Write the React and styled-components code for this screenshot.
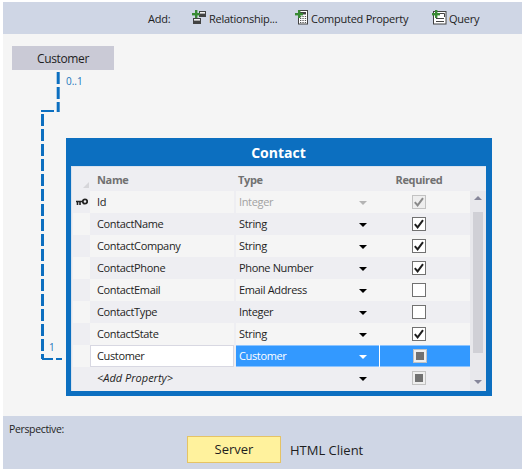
import React from "react";
import styled, { createGlobalStyle } from "styled-components";

const rows = [
  { name: "Id", type: "Integer", check: "on", locked: true },
  { name: "ContactName", type: "String", check: "on" },
  { name: "ContactCompany", type: "String", check: "on" },
  { name: "ContactPhone", type: "Phone Number", check: "on" },
  { name: "ContactEmail", type: "Email Address", check: "off" },
  { name: "ContactType", type: "Integer", check: "off" },
  { name: "ContactState", type: "String", check: "on" },
  { name: "Customer", type: "Customer", check: "mixed", selected: true },
  { name: "<Add Property>", type: "", check: "mixed", add: true },
];

const Global = createGlobalStyle`
  html, body { margin: 0; padding: 0; background: #fff; }
  body { font-family: "Open Sans", "Noto Sans", sans-serif; font-size: 11px; letter-spacing: -0.35px; color: #1e1e1e; }
`;

const Frame = styled.div`
  width: 526px;
  height: 470px;
  box-sizing: border-box;
  padding: 2px 4px 1px 3px;
  display: flex;
  flex-direction: column;
`;

const Toolbar = styled.div`
  height: 32px;
  flex: none;
  background: #cfd6e5;
  display: flex;
  align-items: center;
  padding-left: 145px;
  letter-spacing: -0.25px;
`;

const AddLabel = styled.span`
  width: 44px;
`;

const ToolButton = styled.div`
  display: flex;
  align-items: center;
  gap: 2px;
  width: ${(p) => p.$width}px;
`;

const ToolIcon = styled.svg`
  flex: none;
  margin-top: -2px;
`;

const Canvas = styled.div`
  flex: 1;
  position: relative;
  background: #f5f5f5;
`;

const Source = styled.div`
  position: absolute;
  left: 9px;
  top: 12px;
  width: 102px;
  height: 24px;
  background: #cacad6;
  font-size: 12px;
  line-height: 25px;
  text-align: center;
`;

const Connector = styled.svg`
  position: absolute;
  left: 0;
  top: 0;
`;

const Multiplicity = styled.span`
  position: absolute;
  left: ${(p) => p.$x}px;
  top: ${(p) => p.$y}px;
  color: #1c75bc;
  font-size: 10px;
  letter-spacing: 0;
  line-height: 14px;
`;

const Entity = styled.div`
  position: absolute;
  left: 63px;
  top: 104px;
  width: 426px;
  height: 258px;
  box-sizing: border-box;
  background: #0c6fc0;
  padding: 0 6px 5px 5px;
  display: flex;
  flex-direction: column;
`;

const EntityTitle = styled.div`
  height: 28px;
  flex: none;
  color: #fff;
  font-size: 14px;
  font-weight: 700;
  letter-spacing: 0;
  line-height: 29px;
  text-align: center;
`;

const Body = styled.div`
  flex: 1;
  background: #eeeef2;
  box-shadow: inset 1px 1px 0 #d8e2ee;
  display: flex;
  padding: 2px 0 0 2px;
`;

const Table = styled.div`
  width: 397px;
  flex: none;
`;

const HeaderRow = styled.div`
  display: grid;
  grid-template-columns: 17px 146px 144px 90px;
  height: 23px;
  align-items: center;
  color: #717171;
  font-weight: 700;
`;

const Corner = styled.div`
  width: 0;
  height: 0;
  justify-self: end;
  align-self: end;
  margin: 0 1px 3px 0;
  border-left: 6px solid transparent;
  border-bottom: 6px solid #d6d6da;
`;

const HeaderCell = styled.div`
  padding-left: ${(p) => p.$pad || 0}px;
  padding-right: ${(p) => p.$padRight || 0}px;
  text-align: ${(p) => p.$align || "left"};
`;

const Row = styled.div`
  display: grid;
  grid-template-columns: 17px 144px 145px 91px;
  height: 22px;
`;

const Marker = styled.div`
  display: flex;
  align-items: center;
  justify-content: center;
  background: ${(p) => (p.$plain ? "transparent" : p.$odd ? "#f5f5f5" : "#eeeef2")};
`;

const stripe = (p) => {
  if (p.$selected) return "#3399ff";
  if (p.$add) return "#eeeef2";
  return p.$odd ? "#f5f5f5" : "#eeeef2";
};

const NameCell = styled.div`
  box-sizing: border-box;
  line-height: ${(p) => (p.$selected ? 19 : 21)}px;
  background: ${(p) => (p.$selected ? "#fff" : stripe(p))};
  border: ${(p) => (p.$selected ? "1px solid #d8d8e2" : "none")};
  padding-left: ${(p) => (p.$selected ? 6 : 7)}px;
  font-style: ${(p) => (p.$add ? "italic" : "normal")};
  letter-spacing: ${(p) => (p.$add ? "0" : "inherit")};
`;

const TypeCell = styled.div`
  box-sizing: border-box;
  margin-left: 2px;
  padding: 0 12px 0 3px;
  background: ${stripe};
  box-shadow: ${(p) => (p.$selected ? "inset 0 1px 0 #8cc4ff, inset 0 -1px 0 #8cc4ff" : "none")};
  color: ${(p) => (p.$selected ? "#fff" : p.$locked ? "#a2a2a2" : "#1e1e1e")};
  display: flex;
  align-items: flex-start;
  justify-content: space-between;
`;

const TypeName = styled.span`
  line-height: 21px;
  height: 21px;
`;

const Arrow = styled.div`
  width: 0;
  height: 0;
  border-left: 4px solid transparent;
  border-right: 4px solid transparent;
  border-top: 4px solid ${(p) => p.$color};
  margin-top: 10px;
`;

const CheckCell = styled.div`
  box-sizing: border-box;
  display: flex;
  align-items: center;
  justify-content: center;
  padding-right: ${(p) => (p.$selected ? 11 : 12)}px;
  padding-left: ${(p) => (p.$selected ? 0 : 1)}px;
  background: ${stripe};
  box-shadow: ${(p) => (p.$selected ? "inset 0 1px 0 #8cc4ff, inset 0 -1px 0 #8cc4ff" : "none")};
  border-left: ${(p) => (p.$selected ? "1px solid #fff" : "none")};
`;

const Box = styled.div`
  box-sizing: border-box;
  width: 14px;
  height: 14px;
  border: 1px solid ${(p) => (p.$muted ? "#c2c2c2" : "#717171")};
  background: ${(p) => (p.$muted ? "#eeeeee" : "#fff")};
  display: flex;
  align-items: center;
  justify-content: center;
`;

const Fill = styled.div`
  width: 8px;
  height: 8px;
  background: #717171;
`;

const Scrollbar = styled.div`
  box-sizing: border-box;
  width: 16px;
  height: 200px;
  margin-top: 23px;
  padding: 5px 0 0 3px;
  background: #e8e8ec;
  display: flex;
  flex-direction: column;
`;

const ScrollTop = styled.div`
  width: 0;
  height: 0;
  margin-left: 1px;
  border-left: 4px solid transparent;
  border-right: 4px solid transparent;
  border-bottom: 4px solid #86869a;
`;

const ScrollThumb = styled.div`
  width: 10px;
  height: 141px;
  margin-top: 12px;
  background: #d0d0d6;
`;

const ScrollBottom = styled.div`
  width: 0;
  height: 0;
  margin: 27px 0 0 1px;
  border-left: 4px solid transparent;
  border-right: 4px solid transparent;
  border-top: 4px solid #86869a;
`;

const Footer = styled.div`
  height: 53px;
  flex: none;
  background: #cfd6e5;
  box-sizing: border-box;
  padding: 6px 0 0 6px;
  font-size: 10.5px;
  line-height: 14px;
`;

const Switcher = styled.div`
  margin: 0 0 0 178px;
  display: flex;
  align-items: center;
  font-size: 13px;
  letter-spacing: 0;
`;

const ActiveTab = styled.div`
  width: 94px;
  height: 27px;
  box-sizing: border-box;
  background: #fff29d;
  border: 1px solid #e5c365;
  text-align: center;
  line-height: 25px;
`;

const Tab = styled.div`
  margin-left: 9px;
`;

const PlusIcon = () => (
  <>
    <rect x="3" y="0" width="2.4" height="8" fill="#388a34" />
    <rect x="0" y="3" width="8" height="2.4" fill="#388a34" />
  </>
);

const RelationIcon = () => (
  <ToolIcon width="15" height="15" viewBox="0 0 15 15">
    <rect x="7" y="1" width="7" height="6" fill="#424242" />
    <rect x="8" y="2" width="5" height="1.6" fill="#f0f0f0" />
    <rect x="1" y="8" width="8" height="6" fill="#424242" />
    <rect x="2" y="9" width="6" height="1.6" fill="#f0f0f0" />
    <PlusIcon />
  </ToolIcon>
);

const CalcIcon = () => (
  <ToolIcon width="14" height="15" viewBox="0 0 14 15">
    <rect x="3.5" y="0.5" width="9" height="13.5" fill="#fff" stroke="#424242" />
    <rect x="5" y="2" width="6" height="2.5" fill="#424242" />
    <path d="M5 6.5h1.3M7.4 6.5h1.3M9.8 6.5h1.3M5 8.5h1.3M7.4 8.5h1.3M9.8 8.5h1.3M5 10.5h1.3M7.4 10.5h1.3M9.8 10.5h1.3M5 12.5h1.3M7.4 12.5h1.3M9.8 12.5h1.3" stroke="#555" />
    <PlusIcon />
  </ToolIcon>
);

const QueryIcon = () => (
  <ToolIcon width="15" height="15" viewBox="0 0 15 15">
    <rect x="1.5" y="1.5" width="12.5" height="12.5" fill="#fff" stroke="#424242" />
    <path d="M7 3.5h5.5V7M4 8.5h8M4 11.5h8" stroke="#424242" fill="none" />
    <PlusIcon />
  </ToolIcon>
);

const CheckMark = ({ color }) => (
  <svg width="12" height="12" viewBox="0 0 12 12">
    <path d="M1.8 6.2 4.6 9.4 10 2.2" stroke={color} strokeWidth="2" fill="none" />
  </svg>
);

const KeyIcon = () => (
  <svg width="12" height="8" viewBox="0 0 12 8">
    <circle cx="9" cy="3.5" r="2.2" fill="none" stroke="#222" strokeWidth="1.8" />
    <path d="M0 3.5h7M1.5 3.5v3.5M4 3.5v3.5" stroke="#222" strokeWidth="1.6" fill="none" />
  </svg>
);

const Required = ({ row }) => {
  if (row.check === "mixed")
    return (
      <Box $muted>
        <Fill />
      </Box>
    );
  return (
    <Box $muted={row.locked}>
      {row.check === "on" && <CheckMark color={row.locked ? "#8a8a8a" : "#1e1e1e"} />}
    </Box>
  );
};

const App = () => (
  <Frame>
    <Global />
    <Toolbar>
      <AddLabel>Add:</AddLabel>
      <ToolButton $width={103}>
        <RelationIcon />
        Relationship...
      </ToolButton>
      <ToolButton $width={137}>
        <CalcIcon />
        Computed Property
      </ToolButton>
      <ToolButton>
        <QueryIcon />
        Query
      </ToolButton>
    </Toolbar>
    <Canvas>
      <Source>Customer</Source>
      <Connector width="70" height="340">
        <g stroke="#0c6fc0" strokeWidth="3" fill="none">
          <path d="M55.2 38V78" strokeDasharray="12 3" />
          <path d="M51 77H38" strokeWidth="2" />
          <path d="M39.5 80V325" strokeDasharray="12 3" />
          <path d="M39 325H59" strokeWidth="2" strokeDasharray="11 3" />
        </g>
      </Connector>
      <Multiplicity $x={63} $y={40}>0..1</Multiplicity>
      <Multiplicity $x={46} $y={306}>1</Multiplicity>
      <Entity>
        <EntityTitle>Contact</EntityTitle>
        <Body>
          <Table>
            <HeaderRow>
              <Corner />
              <HeaderCell $pad={7}>Name</HeaderCell>
              <HeaderCell $pad={2}>Type</HeaderCell>
              <HeaderCell $align="center" $padRight={12}>Required</HeaderCell>
            </HeaderRow>
            {rows.map((row, i) => {
              const odd = i % 2 === 0;
              return (
                <Row key={row.name}>
                  <Marker $odd={!odd} $plain={row.add || row.locked}>
                    {row.locked && <KeyIcon />}
                  </Marker>
                  <NameCell $odd={odd} $selected={row.selected} $add={row.add}>
                    {row.name}
                  </NameCell>
                  <TypeCell $odd={odd} $selected={row.selected} $add={row.add} $locked={row.locked}>
                    <TypeName>{row.type}</TypeName>
                    <Arrow $color={row.selected ? "#fff" : row.locked ? "#b4b4b4" : "#000"} />
                  </TypeCell>
                  <CheckCell $odd={odd} $selected={row.selected} $add={row.add}>
                    <Required row={row} />
                  </CheckCell>
                </Row>
              );
            })}
          </Table>
          <Scrollbar>
            <ScrollTop />
            <ScrollThumb />
            <ScrollBottom />
          </Scrollbar>
        </Body>
      </Entity>
    </Canvas>
    <Footer>
      Perspective:
      <Switcher>
        <ActiveTab>Server</ActiveTab>
        <Tab>HTML Client</Tab>
      </Switcher>
    </Footer>
  </Frame>
);

export default App;
